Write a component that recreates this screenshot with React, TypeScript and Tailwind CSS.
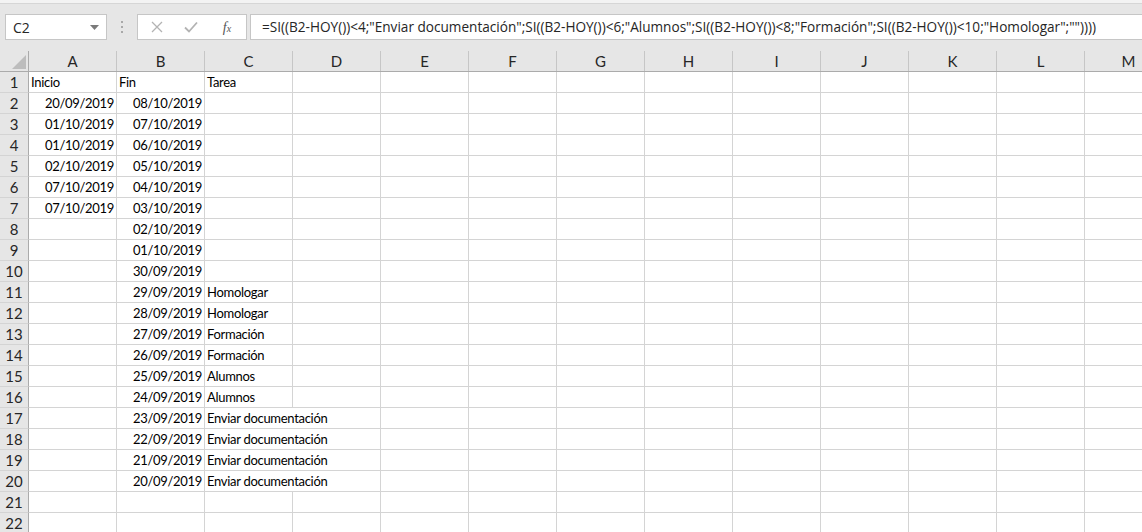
import React from "react";

const cols = ["A", "B", "C", "D", "E", "F", "G", "H", "I", "J", "K", "L", "M"];

const dataA: Record<number, string> = {
  2: "20/09/2019",
  3: "01/10/2019",
  4: "01/10/2019",
  5: "02/10/2019",
  6: "07/10/2019",
  7: "07/10/2019",
};
const dataB: Record<number, string> = {
  2: "08/10/2019",
  3: "07/10/2019",
  4: "06/10/2019",
  5: "05/10/2019",
  6: "04/10/2019",
  7: "03/10/2019",
  8: "02/10/2019",
  9: "01/10/2019",
  10: "30/09/2019",
  11: "29/09/2019",
  12: "28/09/2019",
  13: "27/09/2019",
  14: "26/09/2019",
  15: "25/09/2019",
  16: "24/09/2019",
  17: "23/09/2019",
  18: "22/09/2019",
  19: "21/09/2019",
  20: "20/09/2019",
};
const dataC: Record<number, string> = {
  11: "Homologar",
  12: "Homologar",
  13: "Formación",
  14: "Formación",
  15: "Alumnos",
  16: "Alumnos",
  17: "Enviar documentación",
  18: "Enviar documentación",
  19: "Enviar documentación",
  20: "Enviar documentación",
};

const cellFont = { fontFamily: "Lato, 'Liberation Sans', sans-serif" };

function Toolbar() {
  return (
    <div className="h-[51px] bg-[#e6e6e6] flex flex-col">
      <div className="h-[4px] bg-[#f3f3f3] border-b border-[#d6d6d6]" />
      <div className="flex items-start pt-[10px]">
        <div className="ml-[5px] w-[102px] h-[26px] bg-white border border-[#c6c6c6] flex items-center justify-between pl-[7px] pr-[7px]">
          <span className="text-[14px] text-[#262626]" style={{ fontFamily: "'Open Sans', sans-serif" }}>C2</span>
          <svg width="9" height="5" viewBox="0 0 9 5"><path d="M0 0 L9 0 L4.5 5 Z" fill="#7a7a7a" /></svg>
        </div>
        <div className="w-[30px] h-[26px] flex flex-col items-center justify-center gap-[3px]">
          <span className="w-[2px] h-[2px] bg-[#a8a8a8]" />
          <span className="w-[2px] h-[2px] bg-[#a8a8a8]" />
          <span className="w-[2px] h-[2px] bg-[#a8a8a8]" />
        </div>
        <div className="w-[110px] h-[26px] bg-white border border-[#c6c6c6] flex items-center">
          <div className="w-[38px] flex justify-center">
            <svg width="12" height="12" viewBox="0 0 12 12"><path d="M1 1 L11 11 M11 1 L1 11" stroke="#b3b3b3" strokeWidth="1.3" /></svg>
          </div>
          <div className="w-[30px] flex justify-center">
            <svg width="14" height="12" viewBox="0 0 14 12"><path d="M1 6.5 L5 10.5 L13 1.5" stroke="#b3b3b3" strokeWidth="1.8" fill="none" /></svg>
          </div>
          <div className="flex-1 flex justify-center pl-[2px]">
            <span className="text-[14px] italic text-[#555]" style={{ fontFamily: "'Liberation Serif', serif" }}>
              f<span className="text-[10px]">x</span>
            </span>
          </div>
        </div>
        <div className="ml-[3px] flex-1 h-[26px] bg-white border border-[#c6c6c6] border-r-0 flex items-center pl-[11px] overflow-hidden whitespace-nowrap">
          <span className="text-[13.6px] text-[#262626]" style={{ fontFamily: "'Open Sans', sans-serif" }}>
            =SI((B2-HOY())&lt;4;"Enviar documentación";SI((B2-HOY())&lt;6;"Alumnos";SI((B2-HOY())&lt;8;"Formación";SI((B2-HOY())&lt;10;"Homologar";""))))
          </span>
        </div>
      </div>
    </div>
  );
}

function HeaderRow() {
  return (
    <div className="flex h-[21px] bg-[#e6e6e6] border-b border-[#ababab]">
      <div className="w-[29px] shrink-0 border-r border-[#ababab] relative">
        <svg className="absolute right-[2px] bottom-[2px]" width="14" height="14" viewBox="0 0 14 14"><path d="M14 0 L14 14 L0 14 Z" fill="#bdbdbd" /></svg>
      </div>
      {cols.map((c) => (
        <div
          key={c}
          className="w-[88px] shrink-0 border-r border-[#c6c6c6] flex items-center justify-center text-[15px] text-[#262626]"
          style={cellFont}
        >
          {c}
        </div>
      ))}
    </div>
  );
}

function Row({ n }: { n: number }) {
  const a = n === 1 ? "Inicio" : dataA[n];
  const b = n === 1 ? "Fin" : dataB[n];
  const c = n === 1 ? "Tarea" : dataC[n];
  const alignRight = n !== 1;
  const longC = !!(dataC[n] && dataC[n].length > 12);
  return (
    <div className="flex h-[21px]">
      <div
        className="w-[29px] shrink-0 bg-[#e6e6e6] border-r border-[#ababab] border-b border-b-[#d4d4d4] flex items-center justify-center text-[15px] text-[#262626]"
        style={cellFont}
      >
        {n}
      </div>
      {cols.map((col, i) => {
        let content: string | undefined;
        let right = false;
        if (i === 0) { content = a; right = alignRight; }
        if (i === 1) { content = b; right = alignRight; }
        if (i === 2) content = c;
        const overflow = i === 2 && longC;
        return (
          <div
            key={col}
            className={`w-[88px] shrink-0 border-b border-[#d4d4d4] flex items-center pt-[2px] text-[13px] tracking-[-0.3px] text-black whitespace-nowrap ${overflow ? "border-r-0 overflow-visible z-10" : "border-r overflow-hidden"} ${right ? "justify-end pr-[2px]" : "pl-[2px]"}`}
            style={cellFont}
          >
            {content}
          </div>
        );
      })}
    </div>
  );
}

export default function App() {
  const rows = Array.from({ length: 22 }, (_, i) => i + 1);
  return (
    <div className="w-[1142px] h-[532px] overflow-hidden bg-white">
      <Toolbar />
      <HeaderRow />
      {rows.map((n) => (
        <Row key={n} n={n} />
      ))}
    </div>
  );
}
